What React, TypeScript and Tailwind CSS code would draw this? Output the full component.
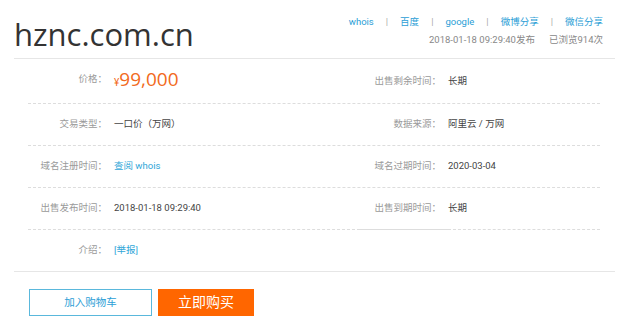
import React from "react"

const font = "font-['Roboto','Noto_Sans_CJK_SC',sans-serif]"

type Cell = { label: string; value: React.ReactNode }

const rows: [Cell, Cell | null][] = [
  [
    { label: "交易类型：", value: "一口价（万网）" },
    { label: "数据来源：", value: "阿里云 / 万网" },
  ],
  [
    { label: "域名注册时间：", value: <span className="text-[#2fa6d8]">查阅 whois</span> },
    { label: "域名过期时间：", value: "2020-03-04" },
  ],
  [
    { label: "出售发布时间：", value: "2018-01-18 09:29:40" },
    { label: "出售到期时间：", value: "长期" },
  ],
]

function Pair({ cell, labelW }: { cell: Cell; labelW: string }) {
  return (
    <div className="flex items-center">
      <span className={`${labelW} shrink-0 text-right text-[9.5px] text-[#9a9a9a]`}>{cell.label}</span>
      <span className="ml-[7px] text-[9.5px] text-[#444]">{cell.value}</span>
    </div>
  )
}

export default function App() {
  const links = ["whois", "百度", "google", "微博分享", "微信分享"]

  return (
    <div className={`w-[630px] h-[333px] bg-white ${font}`}>
      {/* header */}
      <div className="flex justify-between pl-[14px] pr-[27px] h-[58px]">
        <h1 className="mt-[14px] text-[31px] leading-[40px] text-[#333] font-['Open_Sans',sans-serif]">hznc.com.cn</h1>
        <div className="flex flex-col items-end pt-[14px]">
          <div className="flex items-center text-[9.5px] leading-[16px] text-[#2b9ed6]">
            {links.map((l, i) => (
              <React.Fragment key={l}>
                {i > 0 && <span className="mx-[12px] text-[#aaa]">|</span>}
                <span>{l}</span>
              </React.Fragment>
            ))}
          </div>
          <div className="mt-[3px] flex text-[9.5px] leading-[14px] text-[#888]">
            <span>2018-01-18 09:29:40发布</span>
            <span className="ml-[14px]">已浏览914次</span>
          </div>
        </div>
      </div>
      <div className="ml-[14px] w-[601px] border-t border-[#e6e6e6]" />

      {/* detail rows */}
      <div className="ml-[28px] w-[572px]">
        <div className="grid grid-cols-2 h-[45px] border-b border-dashed border-[#ddd]">
          <div className="flex items-center pb-[3px]">
            <span className="w-[79px] shrink-0 text-right text-[9.5px] text-[#9a9a9a]">价格：</span>
            <span className="ml-[7px] flex items-baseline text-[#f26a21]">
              <span className="text-[10px]">¥</span>
              <span className="text-[19px] leading-none font-['Open_Sans',sans-serif]">99,000</span>
            </span>
          </div>
          <Pair cell={{ label: "出售剩余时间：", value: "长期" }} labelW="w-[127px]" />
        </div>
        {rows.map(([l, r], i) => (
          <div key={i}>
            <div className="grid grid-cols-2 h-[41px]">
              <Pair cell={l} labelW="w-[79px]" />
              {r && <Pair cell={r} labelW="w-[127px]" />}
            </div>
            {i === 2 ? (
              <div className="flex">
                <div className="w-[332px] border-t border-dashed border-[#ddd]" />
                <div className="w-[88px] border-t border-[#ddd]" />
                <div className="flex-1 border-t border-dashed border-[#ddd]" />
              </div>
            ) : (
              <div className="border-t border-dashed border-[#ddd]" />
            )}
          </div>
        ))}
        <div className="flex items-center h-[41px]">
          <span className="w-[79px] shrink-0 text-right text-[9.5px] text-[#9a9a9a]">介绍：</span>
          <span className="ml-[7px] text-[9.5px] text-[#2fa6d8]">[举报]</span>
        </div>
      </div>
      <div className="ml-[14px] w-[601px] border-t border-[#e6e6e6]" />

      {/* actions */}
      <div className="flex gap-[6px] ml-[29px] mt-[17px]">
        <button className="w-[123px] h-[27px] border border-[#5ab8dc] bg-white text-[10.5px] text-[#2b9ed6]">
          加入购物车
        </button>
        <button className="w-[96px] h-[27px] bg-[#ff6600] text-[14px] text-white">立即购买</button>
      </div>
    </div>
  )
}
